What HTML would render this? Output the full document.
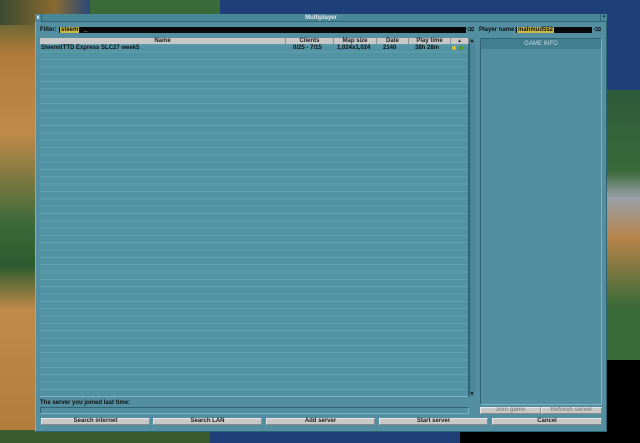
<!DOCTYPE html>
<html><head><style>
*{margin:0;padding:0;box-sizing:border-box}
body{width:640px;height:443px;overflow:hidden;position:relative;font-family:"Liberation Sans",sans-serif;font-size:6px;font-weight:bold;background:#1e3f78}
.a{position:absolute}
.btn{position:absolute;background:#c8c8c8;border-top:1px solid #e8e8e8;border-left:1px solid #e8e8e8;border-bottom:1px solid #8a8a8a;border-right:1px solid #8a8a8a;text-align:center;color:#202020;line-height:5px;font-size:6px}
.hd{position:absolute;top:0;height:6px;background:#c8c8c8;border-right:1px solid #909090;text-align:center;line-height:6px;font-size:6px;color:#202020}
</style></head><body>
<div class="a" style="left:0;top:0;width:40px;height:443px;background:linear-gradient(180deg,#3a5a30 0,#b07a3a 12%,#c08a48 30%,#3f6a3a 50%,#2d5a2f 60%,#c08a48 70%,#b07a3a 100%)"></div>
<div class="a" style="left:0;top:0;width:90px;height:25px;background:linear-gradient(90deg,#3a4a30,#8a6a30 60%,#2a4a7a)"></div>
<div class="a" style="left:90px;top:0;width:130px;height:15px;background:#3a6a3a"></div>
<div class="a" style="left:607px;top:90px;width:33px;height:270px;background:linear-gradient(180deg,#2e5a38,#3a6a3a 30%,#9aa0a8 40%,#b8844a 55%,#3a6a38 80%)"></div>
<div class="a" style="left:607px;top:360px;width:33px;height:83px;background:#000"></div>
<div class="a" style="left:460px;top:430px;width:180px;height:13px;background:#000"></div>
<div class="a" style="left:0;top:430px;width:210px;height:13px;background:#3a5a30"></div>
<div class="a" style="left:35px;top:14px;width:572px;height:418px;background:#538fa0;border:1px solid #7ab4c4;border-right-color:#2e6474;border-bottom-color:#2e6474"></div>
<div class="a" style="left:35px;top:14px;width:572px;height:8px;background:#4a8798;border-bottom:1px solid #2e6474;color:#e8e8e8;text-align:center;line-height:8px">Multiplayer</div>
<div class="a" style="left:35px;top:14px;width:7px;height:8px;background:#4a8798;border-right:1px solid #2e6474;color:#fff;line-height:8px;text-align:center">x</div>
<div class="a" style="left:600px;top:14px;width:7px;height:8px;border-left:1px solid #2e6474;color:#000;line-height:7px;text-align:center">▪</div>
<div class="a" style="left:40px;top:27px;color:#101010;line-height:6px">Filter:</div>
<div class="a" style="left:59px;top:27px;width:407px;height:6px;background:#080808"></div>
<div class="a" style="left:60px;top:27px;height:6px;background:#c8b848;color:#101010;line-height:6px;padding:0 1px">steem</div>
<div class="a" style="left:84px;top:27px;color:#e8e8e8;line-height:6px">_</div>
<div class="a" style="left:467px;top:27px;width:7px;height:6px;color:#101010;font-size:5px;line-height:6px">⌫</div>
<div class="a" style="left:479px;top:27px;color:#101010;line-height:6px">Player name:</div>
<div class="a" style="left:516px;top:27px;width:76px;height:6px;background:#080808"></div>
<div class="a" style="left:517px;top:27px;height:6px;background:#c8b848;color:#101010;line-height:6px;padding:0 1px">mahmud552</div>
<div class="a" style="left:594px;top:27px;width:7px;height:6px;color:#101010;font-size:5px;line-height:6px">⌫</div>
<div class="a" style="left:40px;top:38px;width:429px;height:359px;background:#5192a3;border-right:1px solid #2e6474;border-bottom:1px solid #7ab4c4;background-image:repeating-linear-gradient(180deg,#5192a3 0,#5192a3 6.33px,#64a2b2 6.33px,#64a2b2 7.33px)"></div>
<div class="a" style="left:40px;top:38px;width:429px;height:7px">
<div class="hd" style="left:0;width:246px">Name</div>
<div class="hd" style="left:246px;width:48px">Clients</div>
<div class="hd" style="left:294px;width:43px">Map size</div>
<div class="hd" style="left:337px;width:32px">Date</div>
<div class="hd" style="left:369px;width:42px">Play time</div>
<div class="hd" style="left:411px;width:18px;font-size:5px">▴</div>
</div>
<div class="a" style="left:41px;top:45px;width:428px;height:6px;color:#101010;line-height:6px">
<span class="a" style="left:0">SteemitTTD Express SLC27 week5</span>
<span class="a" style="left:252px">0/25 - 7/15</span>
<span class="a" style="left:296px">1,024x1,024</span>
<span class="a" style="left:342px">2140</span>
<span class="a" style="left:374px">38h 28m</span>
<span class="a" style="left:411px;top:1px;width:4px;height:4px;border-radius:2px;background:#e8c020"></span>
<span class="a" style="left:418px;top:1px;width:4px;height:4px;border-radius:2px;background:#4a9a20"></span>
</div>
<div class="a" style="left:469px;top:38px;width:6px;height:359px;background:#4a8798;border-left:1px solid #2e6474"></div>
<div class="a" style="left:469px;top:38px;width:6px;height:6px;color:#000;font-size:5px;text-align:center;line-height:6px">▴</div>
<div class="a" style="left:469px;top:391px;width:6px;height:6px;color:#000;font-size:5px;text-align:center;line-height:6px">▾</div>
<div class="a" style="left:480px;top:38px;width:122px;height:367px;background:#538fa0;border:1px solid #2e6474;border-right-color:#7ab4c4;border-bottom-color:#7ab4c4"></div>
<div class="a" style="left:481px;top:39px;width:120px;height:10px;background:#417e90;color:#c8d8e0;text-align:center;line-height:10px;font-weight:normal">GAME INFO</div>
<div class="a" style="left:40px;top:400px;color:#101010;line-height:6px">The server you joined last time:</div>
<div class="a" style="left:40px;top:407px;width:429px;height:7px;border:1px solid #2e6474;border-right-color:#7ab4c4;border-bottom-color:#7ab4c4"></div>
<div class="btn" style="left:480px;top:407px;width:61px;height:7px;color:#8a8a8a">Join game</div>
<div class="btn" style="left:541px;top:407px;width:61px;height:7px;color:#8a8a8a">Refresh server</div>
<div class="btn" style="left:41px;top:418px;width:109px;height:7px">Search internet</div>
<div class="btn" style="left:153px;top:418px;width:109px;height:7px">Search LAN</div>
<div class="btn" style="left:266px;top:418px;width:109px;height:7px">Add server</div>
<div class="btn" style="left:379px;top:418px;width:109px;height:7px">Start server</div>
<div class="btn" style="left:492px;top:418px;width:110px;height:7px">Cancel</div>
</body></html>
